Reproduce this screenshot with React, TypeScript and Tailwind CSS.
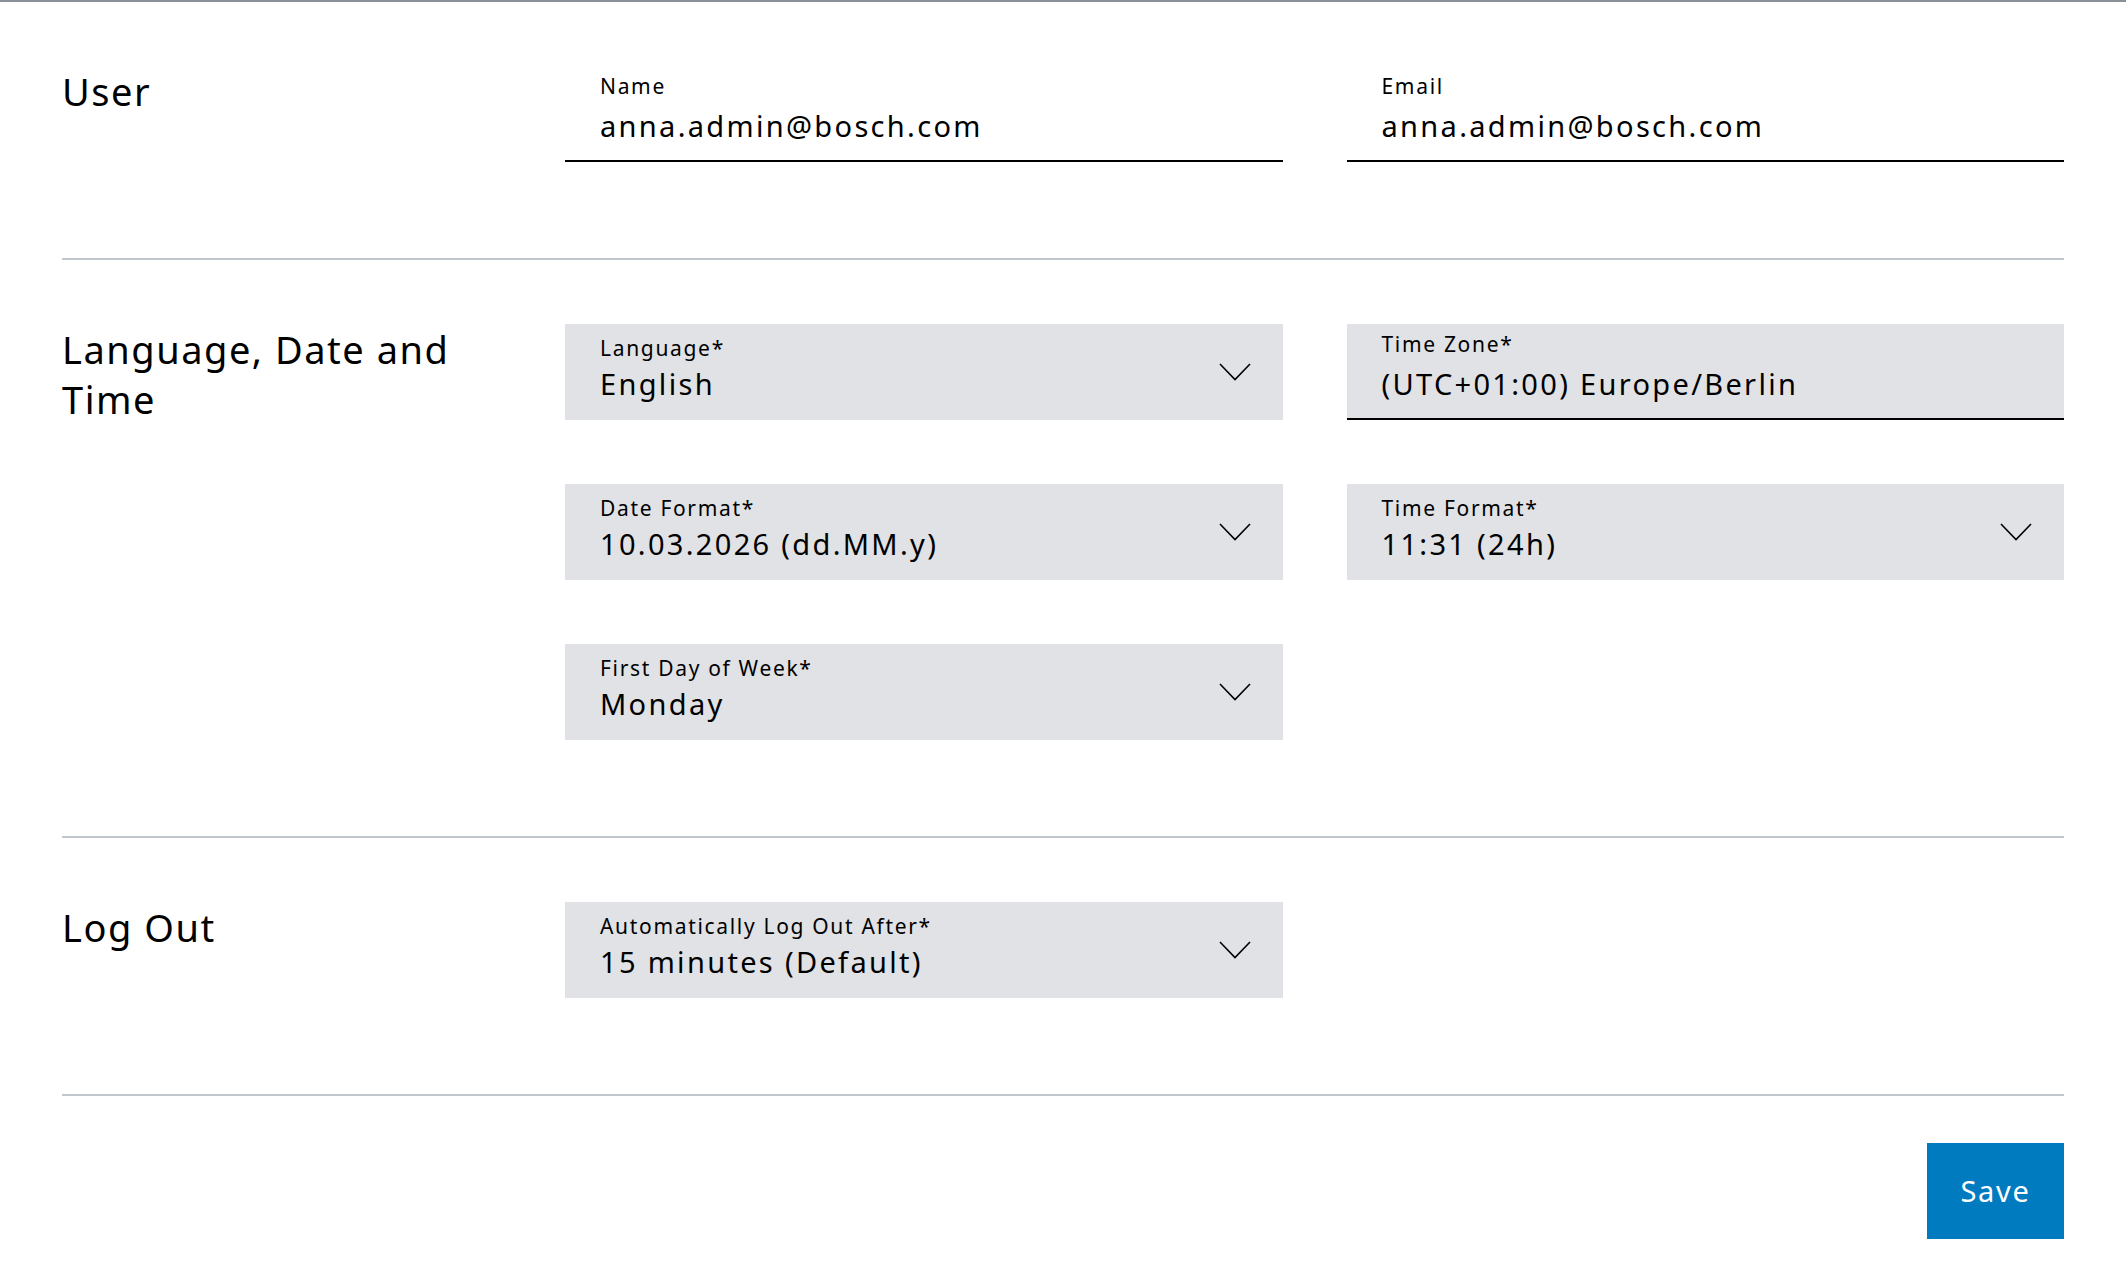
import React from "react";

const font = { fontFamily: '"Noto Sans", "Open Sans", Arial, sans-serif' };

function Chevron() {
  return (
    <svg width="32" height="18" viewBox="0 0 32 18" fill="none" className="shrink-0">
      <path d="M1 1 L16 16.5 L31 1" stroke="#000" strokeWidth="1.6" />
    </svg>
  );
}

function SectionTitle({ children }: { children: React.ReactNode }) {
  return (
    <h2 className="text-[38px] leading-[50px] tracking-[0.04em] text-black font-normal pr-8">
      {children}
    </h2>
  );
}

function TextField({ label, value, filled }: { label: string; value: string; filled?: boolean }) {
  return (
    <div
      className={
        "h-24 border-b-2 border-black pl-[35px] pr-8 pt-[6px] " +
        (filled ? "bg-[#e0e2e5]" : "bg-transparent")
      }
    >
      <div className="text-[21px] leading-[28px] tracking-[0.08em] text-black">{label}</div>
      <div className="mt-[8px] text-[29px] leading-[36px] tracking-[0.08em] text-black whitespace-nowrap">
        {value}
      </div>
    </div>
  );
}

function SelectField({ label, value }: { label: string; value: string }) {
  return (
    <div className="h-24 bg-[#e0e2e5] pl-[35px] pr-8 flex items-center justify-between">
      <div className="self-start pt-[10px]">
        <div className="text-[21px] leading-[28px] tracking-[0.08em] text-black">{label}</div>
        <div className="mt-[4px] text-[29px] leading-[36px] tracking-[0.08em] text-black whitespace-nowrap">
          {value}
        </div>
      </div>
      <Chevron />
    </div>
  );
}

export default function App() {
  return (
    <div className="min-h-screen bg-white border-t-2 border-[#8a9097] px-[62px]" style={font}>
      {/* User */}
      <section className="grid grid-cols-[439px_1fr_1fr] gap-x-16 pt-16 pb-24 border-b-2 border-[#c1c7cc]">
        <SectionTitle>User</SectionTitle>
        <TextField label="Name" value="anna.admin@bosch.com" />
        <TextField label="Email" value="anna.admin@bosch.com" />
      </section>

      {/* Language, Date and Time */}
      <section className="grid grid-cols-[439px_1fr_1fr] gap-x-16 gap-y-16 pt-16 pb-24 border-b-2 border-[#c1c7cc]">
        <div className="row-span-3">
          <SectionTitle>Language, Date and Time</SectionTitle>
        </div>
        <SelectField label="Language*" value="English" />
        <TextField label="Time Zone*" value="(UTC+01:00) Europe/Berlin" filled />
        <SelectField label="Date Format*" value="10.03.2026 (dd.MM.y)" />
        <SelectField label="Time Format*" value="11:31 (24h)" />
        <SelectField label="First Day of Week*" value="Monday" />
      </section>

      {/* Log Out */}
      <section className="grid grid-cols-[439px_1fr_1fr] gap-x-16 pt-16 pb-24 border-b-2 border-[#c1c7cc]">
        <SectionTitle>Log Out</SectionTitle>
        <SelectField label="Automatically Log Out After*" value="15 minutes (Default)" />
      </section>

      <div className="flex justify-end pt-[47px]">
        <button className="h-24 w-[137px] bg-[#007bc0] text-white text-[29px] tracking-[0.06em]">
          Save
        </button>
      </div>
    </div>
  );
}
